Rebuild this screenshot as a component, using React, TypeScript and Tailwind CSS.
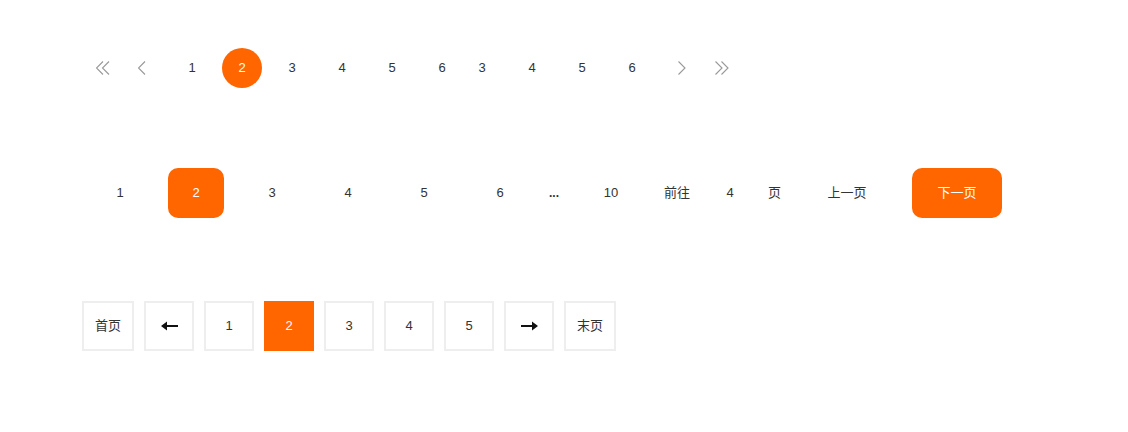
import React from 'react';

const font = { fontFamily: '"Liberation Sans", "Noto Sans CJK SC", sans-serif' };

function Chevron({ dir, double }: { dir: 'left' | 'right'; double?: boolean }) {
  const w = double ? 15 : 9;
  const pts = (x: number) =>
    dir === 'left' ? `${x + 7},0.5 ${x + 0.5},7 ${x + 7},13.5` : `${x + 0.5},0.5 ${x + 7},7 ${x + 0.5},13.5`;
  return (
    <svg width={w} height={14} viewBox={`0 0 ${w} 14`} fill="none" stroke="#999" strokeWidth={1.1}>
      <polyline points={pts(0)} />
      {double && <polyline points={pts(6)} />}
    </svg>
  );
}

function Arrow({ dir }: { dir: 'left' | 'right' }) {
  return (
    <svg width={17} height={10} viewBox="0 0 17 10" className={dir === 'right' ? 'rotate-180' : ''}>
      <path d="M0 5 L6 0.5 L6 4 L17 4 L17 6 L6 6 L6 9.5 Z" fill="#111" />
    </svg>
  );
}

function SimplePager() {
  const first = [1, 2, 3, 4, 5, 6];
  const second = [3, 4, 5, 6];
  return (
    <div className="flex items-center h-[40px] text-[13px] text-[#333]">
      <span className="w-[40px] h-[40px] flex items-center justify-center pl-[2px]">
        <Chevron dir="left" double />
      </span>
      <span className="w-[40px] h-[40px] flex items-center justify-center">
        <Chevron dir="left" />
      </span>
      {first.map((n) => (
        <span
          key={`a${n}`}
          className={`ml-[10px] w-[40px] h-[40px] rounded-full flex items-center justify-center ${
            n === 2 ? 'bg-[#ff6600] text-white' : ''
          }`}
        >
          {n}
        </span>
      ))}
      {second.map((n, i) => (
        <span
          key={`b${n}`}
          className={`${i === 0 ? '' : 'ml-[10px]'} w-[40px] h-[40px] flex items-center justify-center`}
        >
          {n}
        </span>
      ))}
      <span className="ml-[10px] w-[40px] h-[40px] flex items-center justify-center">
        <Chevron dir="right" />
      </span>
      <span className="w-[40px] h-[40px] flex items-center justify-center">
        <Chevron dir="right" double />
      </span>
    </div>
  );
}

function JumpPager() {
  return (
    <div className="flex items-center h-[50px] ml-[10px] text-[13px] text-[#333]">
      {[1, 2, 3, 4, 5, 6].map((n, i) => (
        <span
          key={n}
          className={`${i === 0 ? '' : 'ml-[20px]'} w-[56px] h-[50px] rounded-[10px] flex items-center justify-center ${
            n === 2 ? 'bg-[#ff6600] text-white' : ''
          }`}
        >
          {n}
        </span>
      ))}
      <span className="ml-[21px] font-bold text-[12px]">...</span>
      <span className="ml-[24px] w-[56px] h-[50px] flex items-center justify-center">10</span>
      <span className="ml-[25px]">前往</span>
      <input
        className="ml-[20px] w-[40px] text-center outline-none bg-transparent text-[#333]"
        style={font}
        defaultValue="4"
      />
      <span className="ml-[18px]">页</span>
      <span className="ml-[21px] w-[90px] h-[50px] rounded-[10px] flex items-center justify-center">上一页</span>
      <span className="ml-[20px] w-[90px] h-[50px] rounded-[10px] bg-[#ff6600] text-white flex items-center justify-center">
        下一页
      </span>
    </div>
  );
}

function BoxPager() {
  const box = 'h-[50px] border-2 border-[#eeeeee] flex items-center justify-center';
  return (
    <div className="flex items-center gap-[10px] text-[13px] text-[#333]">
      <span className={`${box} w-[52px]`}>首页</span>
      <span className={`${box} w-[50px]`}>
        <Arrow dir="left" />
      </span>
      {[1, 2, 3, 4, 5].map((n) => (
        <span
          key={n}
          className={`h-[50px] w-[50px] border-2 flex items-center justify-center ${
            n === 2 ? 'bg-[#ff6600] border-[#ff6600] text-white' : 'border-[#eeeeee]'
          }`}
        >
          {n}
        </span>
      ))}
      <span className={`${box} w-[50px]`}>
        <Arrow dir="right" />
      </span>
      <span className={`${box} w-[52px]`}>末页</span>
    </div>
  );
}

export default function App() {
  return (
    <div className="w-[1128px] h-[432px] bg-white pt-[48px] pl-[82px]" style={font}>
      <SimplePager />
      <div className="mt-[80px]">
        <JumpPager />
      </div>
      <div className="mt-[83px]">
        <BoxPager />
      </div>
    </div>
  );
}
